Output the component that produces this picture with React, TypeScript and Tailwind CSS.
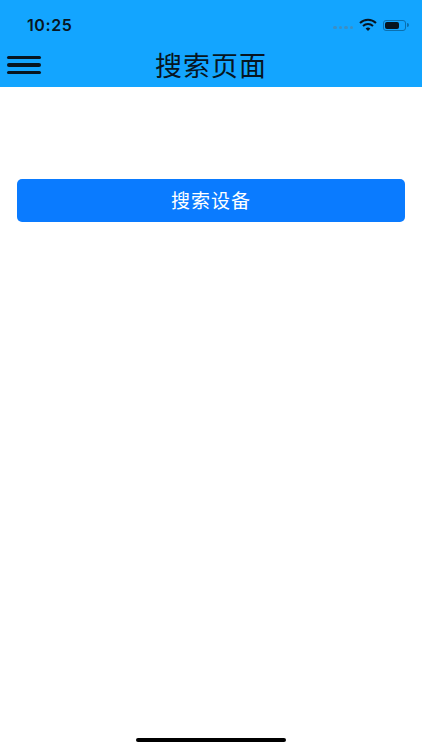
export default function App() {
  return (
    <div className="relative w-[422px] h-[750px] bg-white overflow-hidden font-['Liberation_Sans','Noto_Sans_CJK_SC',sans-serif]">
      <header className="h-[87px] bg-[#13a5ff] flex flex-col">
        <div className="h-[45px] pt-[15px] flex items-start">
          <span className="ml-[27px] text-[16px] leading-[20px] text-[#071521] font-['Inter','Liberation_Sans',sans-serif] font-semibold tracking-[0.6px]">10:25</span>
          <div className="ml-auto mr-[13px] mt-[3px] flex items-center">
            <div className="flex gap-[2px] mr-[6px] mt-[5px]">
              <span className="w-[3.5px] h-[3.5px] rounded-full bg-[#3d8ec4]" />
              <span className="w-[3.5px] h-[3.5px] rounded-full bg-[#3d8ec4]" />
              <span className="w-[3.5px] h-[3.5px] rounded-full bg-[#3d8ec4]" />
              <span className="w-[3.5px] h-[3.5px] rounded-full bg-[#3d8ec4]" />
            </div>
            <svg width="18" height="14" viewBox="0 0 18 14" className="mr-[6px]">
              <path d="M1 5 A11.5 11.5 0 0 1 17 5" fill="none" stroke="#071521" strokeWidth="2" />
              <path d="M4 8 A7.5 7.5 0 0 1 14 8" fill="none" stroke="#071521" strokeWidth="2" />
              <path d="M6.6 10.6 A3.6 3.6 0 0 1 11.4 10.6 L9 13 Z" fill="#071521" />
            </svg>
            <div className="w-[23px] h-[11px] rounded-[3px] border border-[#0b6fae] p-[1px]">
              <div className="w-[14px] h-full rounded-[2px] bg-[#071521]" />
            </div>
            <span className="ml-[1px] w-[2px] h-[4px] rounded-r-sm bg-[#0b6fae]" />
          </div>
        </div>
        <div className="relative flex-1 flex items-center">
          <div className="ml-[7px] mt-[-2px] w-[34px] flex flex-col gap-[4px]">
            <span className="h-[3.5px] bg-[#071521] rounded-full" />
            <span className="h-[3.5px] bg-[#071521] rounded-full" />
            <span className="h-[3.5px] bg-[#071521] rounded-full" />
          </div>
          <h1 className="ml-[114px] mt-[1px] text-[27px] leading-[32px] font-normal text-[#071521] tracking-[1px]">搜索页面</h1>
        </div>
      </header>
      <main className="px-[17px] pt-[92px]">
        <button className="w-full h-[43px] rounded-[5px] bg-[#0a7bff] text-white text-[19px] leading-[24px] tracking-[1px] pt-[2px] flex items-center justify-center">
          搜索设备
        </button>
      </main>
      <div className="absolute left-[136px] bottom-[8px] w-[150px] h-[4px] rounded-full bg-black" />
    </div>
  );
}
